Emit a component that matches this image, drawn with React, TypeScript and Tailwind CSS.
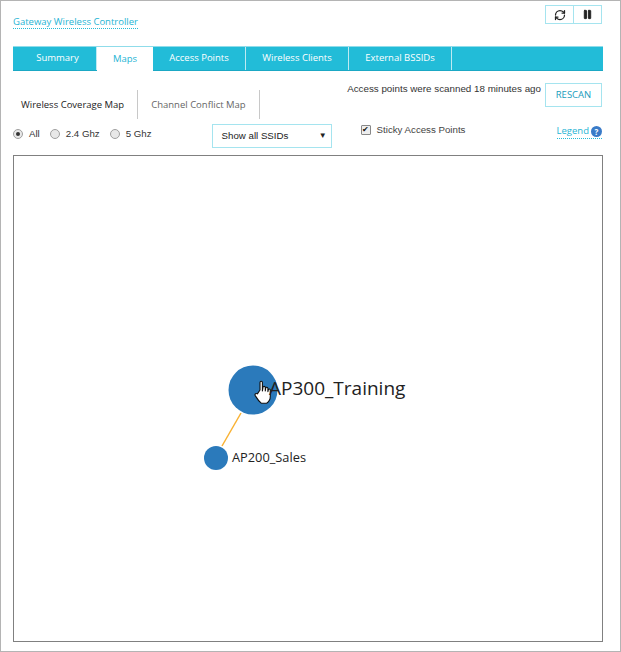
import { Pause, RefreshCw } from "lucide-react";

const tabs = [
  { label: "Summary", width: "w-[84px] pl-[6px]" },
  { label: "Maps", width: "w-[56px]", active: true },
  { label: "Access Points", width: "w-[93px]" },
  { label: "Wireless Clients", width: "w-[103px]" },
  { label: "External BSSIDs", width: "w-[103px]" },
];

function Radio({ label, checked }: { label: string; checked?: boolean }) {
  return (
    <label className="flex items-center gap-[6px]">
      <span className="flex h-[10px] w-[10px] items-center justify-center rounded-full border border-[#a0a0a0] bg-[#e8e8e8]">
        {checked && <span className="h-[4px] w-[4px] rounded-full bg-[#333]" />}
      </span>
      <span>{label}</span>
    </label>
  );
}

function MapCanvas() {
  return (
    <div className="relative ml-[12px] mt-[6px] h-[487px] w-[590px] border border-[#808080] bg-white font-['Open_Sans',sans-serif]">
      <svg className="absolute inset-0" width="588" height="485" viewBox="0 0 588 485">
        <line x1="208" y1="290" x2="227" y2="257" stroke="#f9b233" strokeWidth="1.5" />
        <circle cx="239" cy="234" r="24.5" fill="#2b7abb" />
        <circle cx="202" cy="302" r="12" fill="#2b7abb" />
        {/* hand cursor */}
        <path
          transform="translate(1 -3)"
          d="M245 237v-7.5c0-1.6 2.4-1.6 2.4 0v8.5l.6-3.5c0-1.5 2.3-1.4 2.3 0v3.5l.4-2.8c.2-1.4 2.2-1.2 2.2.2v3.2l.4-1.8c.3-1.2 2-1 2 .3v6.5c0 3.2-1.8 5.5-3.6 6.6h-5.5c-1.4-1.2-4.4-5-6-7.6-.8-1.5.9-2.8 2.2-1.7z"
          fill="#fff"
          stroke="#111"
          strokeWidth="1.1"
          strokeLinejoin="round"
        />
      </svg>
      <span className="absolute left-[255px] top-[219px] text-[19px] leading-[27px] text-[#222]">AP300_Training</span>
      <span className="absolute left-[218px] top-[293px] text-[12.8px] leading-[17px] text-[#222]">AP200_Sales</span>
    </div>
  );
}

export default function App() {
  return (
    <div className="h-[652px] w-[621px] overflow-hidden border border-[#b4b4b4] bg-white font-['Open_Sans',sans-serif] text-[#333]">
      <div className="flex h-[45px] items-start justify-between pl-[12px] pr-[18px]">
        <span className="mt-[14px] border-b border-dotted border-[#25bcd8] text-[9.5px] leading-[13px] text-[#25b4d4]">
          Gateway Wireless Controller
        </span>
        <div className="mt-[4px] flex h-[19px] w-[57px] border border-[#a5e4ef] text-[#222]">
          <span className="flex flex-1 items-center justify-center border-r border-[#a5e4ef]">
            <RefreshCw size={12} strokeWidth={2.5} />
          </span>
          <span className="flex flex-1 items-center justify-center">
            <Pause size={11} strokeWidth={2} fill="#222" />
          </span>
        </div>
      </div>

      <div className="ml-[12px] flex h-[25px] w-[590px] border-t border-b border-t-[#8fdcea] border-b-[#1ba8c4] bg-[#22bcd8]">
        {tabs.map((tab) => (
          <div
            key={tab.label}
            className={
              tab.active
                ? `${tab.width} -my-px flex items-center justify-center border-t border-[#8fdcea] bg-white text-[9.5px] text-[#25b4d4]`
                : `${tab.width} flex items-center justify-center border-r border-[#bfeaf2] text-[9.5px] text-white`
            }
          >
            {tab.label}
          </div>
        ))}
      </div>

      <div className="ml-[12px] flex h-[53px] w-[590px]">
        <div className="mt-[19px] flex h-[29px] items-center text-[9.5px]">
          <span className="border-r border-[#c8c8c8] pl-[8px] pr-[13px] leading-[29px] text-[#222]">Wireless Coverage Map</span>
          <span className="border-r border-[#c8c8c8] px-[13px] leading-[29px] text-[#666]">Channel Conflict Map</span>
        </div>
        <div className="ml-auto flex items-start pr-px">
          <span className="mt-[11px] font-['Liberation_Sans',sans-serif] text-[9.8px] leading-[13px]">
            Access points were scanned 18 minutes ago
          </span>
          <span className="ml-[4px] mt-[12px] flex h-[24px] w-[57px] items-center justify-center border border-[#a5e4ef] text-[9.5px] text-[#1a9cbc]">
            RESCAN
          </span>
        </div>
      </div>

      <div className="ml-[12px] flex h-[25px] w-[590px] font-['Liberation_Sans',sans-serif] text-[9.7px]">
        <div className="flex h-[20px] items-center gap-[10px]">
          <Radio label="All" checked />
          <Radio label="2.4 Ghz" />
          <Radio label="5 Ghz" />
        </div>
        <div className="ml-[60px] flex h-[24px] w-[120px] items-center justify-between border border-[#a5e4ef] pl-[9px] pr-[4px] text-[#222]">
          <span>Show all SSIDs</span>
          <span className="text-[8px]">▼</span>
        </div>
        <label className="ml-[29px] flex h-[12px] items-center gap-[6px] text-[#444]">
          <span className="flex h-[10px] w-[10px] items-center justify-center rounded-[1px] border border-[#888] bg-[#eee] text-[8px] leading-none text-[#111]">
            ✔
          </span>
          Sticky Access Points
        </label>
        <span className="ml-auto mr-px mt-px flex h-[14px] items-center gap-[2px] border-b border-dotted border-[#25bcd8] font-['Open_Sans',sans-serif] text-[9.5px] text-[#25b4d4]">
          Legend
          <span className="flex h-[11px] w-[11px] items-center justify-center rounded-full bg-[#3a7bc8] text-[8px] font-bold text-white">
            ?
          </span>
        </span>
      </div>

      <MapCanvas />
    </div>
  );
}
